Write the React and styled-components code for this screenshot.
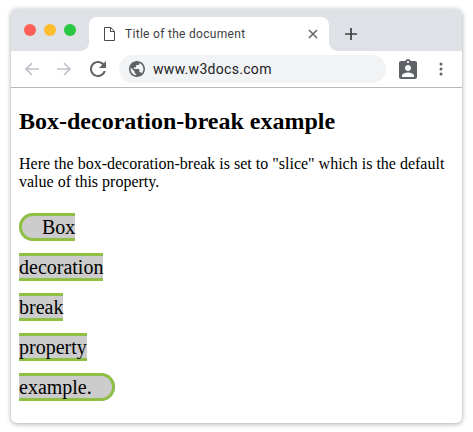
import styled, { createGlobalStyle } from "styled-components";

const GlobalStyle = createGlobalStyle`
  html, body {
    margin: 0;
    background: #fff;
  }
`;

const Page = styled.div`
  padding: 9px 11px;
`;

const Window = styled.div`
  width: 451px;
  height: 414px;
  border-radius: 6px;
  overflow: hidden;
  display: flex;
  flex-direction: column;
  background: #fff;
  box-shadow: 0 1px 5px rgba(0, 0, 0, 0.35);
`;

const TitleBar = styled.div`
  height: 42px;
  flex: none;
  display: flex;
  align-items: flex-end;
  background: #dee1e6;
  padding-left: 13px;
`;

const Dots = styled.div`
  display: flex;
  gap: 8px;
  width: 65px;
  align-self: flex-start;
  padding-top: 15px;
`;

const Dot = styled.span`
  width: 12px;
  height: 12px;
  border-radius: 50%;
  background: ${(p) => p.$color};
`;

const Tab = styled.div`
  position: relative;
  width: 240px;
  height: 34px;
  box-sizing: border-box;
  padding: 0 11px 0 15px;
  display: flex;
  align-items: center;
  background: #fff;
  border-radius: 8px 8px 0 0;

  &::before,
  &::after {
    content: "";
    position: absolute;
    bottom: 0;
    width: 8px;
    height: 8px;
  }

  &::before {
    left: -8px;
    background: radial-gradient(circle at 0 0, #dee1e6 7.5px, #fff 8px);
  }

  &::after {
    right: -8px;
    background: radial-gradient(circle at 100% 0, #dee1e6 7.5px, #fff 8px);
  }
`;

const TabTitle = styled.span`
  flex: 1;
  margin-left: 10px;
  font: 12px "Roboto", "Liberation Sans", sans-serif;
  letter-spacing: 0.3px;
  color: #3c4043;
`;

const NewTab = styled.div`
  margin-left: 15px;
  margin-bottom: 10px;
  display: flex;
`;

const NavBar = styled.div`
  height: 37px;
  flex: none;
  box-sizing: border-box;
  display: flex;
  align-items: center;
  padding: 0 0 1px 13px;
  border-bottom: 1px solid #b9b9b9;
`;

const NavButton = styled.div`
  width: 32px;
  height: 20px;
  display: flex;
  align-items: center;
  justify-content: flex-start;
`;

const Omnibox = styled.div`
  width: 267px;
  height: 28px;
  margin-left: -1px;
  border-radius: 14px;
  background: #f1f3f4;
  display: flex;
  align-items: center;
  padding-left: 10px;
  box-sizing: border-box;
`;

const Url = styled.span`
  margin-left: 8px;
  font: 14px "Roboto", "Liberation Sans", sans-serif;
  letter-spacing: 0.3px;
  color: #202124;
`;

const Actions = styled.div`
  display: flex;
  align-items: center;
  margin-left: 12px;
  gap: 21px;
`;

const Content = styled.div`
  padding: 20px 8px 0;
  font-family: "Liberation Serif", "Times New Roman", serif;
  color: #000;
`;

const Heading = styled.h2`
  margin: 0 0 20px;
  font-size: 24px;
  font-weight: bold;
`;

const Text = styled.p`
  margin: 0 0 16px;
  font-size: 16px;
`;

const Sample = styled.div`
  width: 100px;
  font-size: 20px;
  line-height: 40px;
`;

const Slice = styled.span`
  padding: 0 20px;
  border: 3px solid #8fbf45;
  border-radius: 15px;
  background: #ccc;
  box-decoration-break: slice;
  -webkit-box-decoration-break: slice;
`;

const Arrow = ({ flip }) => (
  <svg width="16" height="16" viewBox="0 0 16 16" fill="none" stroke="#bdc1c6" strokeWidth="1.7" style={flip ? { transform: "scaleX(-1)" } : undefined}>
    <path d="M15 8H2M8 2L2 8l6 6" />
  </svg>
);

const App = () => {
  return (
    <Page>
      <GlobalStyle />
      <Window>
        <TitleBar>
          <Dots>
            <Dot $color="#ff5f57" />
            <Dot $color="#ffbd2e" />
            <Dot $color="#28c840" />
          </Dots>
          <Tab>
            <svg width="11" height="14" viewBox="0 0 11 14" fill="none" stroke="#4a4a4a" strokeWidth="1">
              <path d="M.5.5h6.2l3.8 3.8v9.2H.5zM6.5.5v4h4" />
            </svg>
            <TabTitle>Title of the document</TabTitle>
            <svg width="10" height="10" viewBox="0 0 10 10" fill="none" stroke="#5f6368" strokeWidth="1.5">
              <path d="M1 1l8 8M9 1L1 9" />
            </svg>
          </Tab>
          <NewTab>
            <svg width="14" height="14" viewBox="0 0 14 14" fill="none" stroke="#3c4043" strokeWidth="1.7">
              <path d="M7 1v12M1 7h12" />
            </svg>
          </NewTab>
        </TitleBar>
        <NavBar>
          <NavButton>
            <Arrow />
          </NavButton>
          <NavButton>
            <Arrow flip />
          </NavButton>
          <NavButton>
            <svg width="20" height="20" viewBox="2 2 20 20" fill="#5f6368">
              <path d="M17.65 6.35C16.2 4.9 14.21 4 12 4c-4.42 0-7.99 3.58-7.99 8s3.57 8 7.99 8c3.73 0 6.84-2.55 7.73-6h-2.08c-.82 2.33-3.04 4-5.65 4-3.31 0-6-2.69-6-6s2.69-6 6-6c1.66 0 3.14.69 4.22 1.78L13 11h7V4l-2.35 2.35z" />
            </svg>
          </NavButton>
          <Omnibox>
            <svg width="16" height="16" viewBox="2 2 20 20" fill="#5f6368">
              <path d="M12 2C6.48 2 2 6.48 2 12s4.48 10 10 10 10-4.48 10-10S17.52 2 12 2zm-1 17.93c-3.95-.49-7-3.85-7-7.93 0-.62.08-1.21.21-1.79L9 15v1c0 1.1.9 2 2 2v1.93zm6.9-2.54c-.26-.81-1-1.39-1.9-1.39h-1v-3c0-.55-.45-1-1-1H8v-2h2c.55 0 1-.45 1-1V7h2c1.1 0 2-.9 2-2v-.41c2.93 1.19 5 4.06 5 7.41 0 2.08-.8 3.97-2.1 5.39z" />
            </svg>
            <Url>www.w3docs.com</Url>
          </Omnibox>
          <Actions>
            <svg width="20" height="20" viewBox="2 1 20 20" fill="#5f6368">
              <path d="M19 3h-4.18C14.4 1.84 13.3 1 12 1c-1.3 0-2.4.84-2.82 2H5c-1.1 0-2 .9-2 2v14c0 1.1.9 2 2 2h14c1.1 0 2-.9 2-2V5c0-1.1-.9-2-2-2zm-7 0c.55 0 1 .45 1 1s-.45 1-1 1-1-.45-1-1 .45-1 1-1zm0 4c1.66 0 3 1.34 3 3s-1.34 3-3 3-3-1.34-3-3 1.34-3 3-3zm6 12H6v-1.4c0-2 4-3.1 6-3.1s6 1.1 6 3.1V19z" />
            </svg>
            <svg width="4" height="14" viewBox="0 0 4 14" fill="#5f6368">
              <circle cx="2" cy="2" r="1.5" />
              <circle cx="2" cy="7" r="1.5" />
              <circle cx="2" cy="12" r="1.5" />
            </svg>
          </Actions>
        </NavBar>
        <Content>
          <Heading>Box-decoration-break example</Heading>
          <Text>Here the box-decoration-break is set to "slice" which is the default value of this property.</Text>
          <Sample>
            <Slice>Box decoration break property example.</Slice>
          </Sample>
        </Content>
      </Window>
    </Page>
  );
};

export default App;
